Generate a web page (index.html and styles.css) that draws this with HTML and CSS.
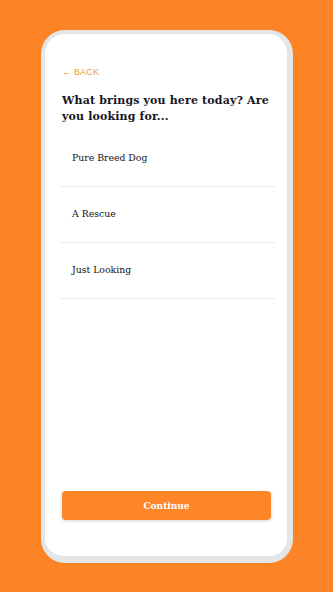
FILE: index.html
```html
<!DOCTYPE html>
<html>
<head>
<meta charset="utf-8">
<link rel="stylesheet" href="styles.css">
</head>
<body>
<div class="phone">
  <div class="screen">
    <a class="back">← BACK</a>
    <h1 class="title">What brings you here today? Are you looking for...</h1>
    <ul class="options">
      <li class="option">Pure Breed Dog</li>
      <li class="option">A Rescue</li>
      <li class="option">Just Looking</li>
    </ul>
    <button class="continue">Continue</button>
  </div>
</div>
</body>
</html>
```

FILE: styles.css
```css
html, body {
  margin: 0;
  padding: 0;
}
body {
  background: #fd8426;
  width: 333px;
  height: 592px;
  box-sizing: border-box;
  padding: 30px 40px 0 41px;
  font-family: "DejaVu Serif", serif;
}
.phone {
  width: 252px;
  height: 533px;
  box-sizing: border-box;
  border-style: solid;
  border-color: #e3e5e7;
  border-width: 4px 6px 7px 4px;
  border-radius: 24px;
  background: #ffffff;
  overflow: hidden;
}
.screen {
  height: 100%;
  box-sizing: border-box;
  padding: 32px 16px 36px 17px;
  display: flex;
  flex-direction: column;
}
.back {
  font-family: "Liberation Sans", Arial, sans-serif;
  font-size: 9px;
  line-height: 12px;
  color: #ec9a3c;
  letter-spacing: 0.2px;
}
.title {
  margin: 15px 0 6px 0;
  font-size: 11px;
  line-height: 16px;
  font-weight: 600;
  color: #16161e;
  letter-spacing: 0.15px;
}
.options {
  list-style: none;
  margin: 0 -4px 0 -2px;
  padding: 0;
  flex: 1;
}
.option {
  height: 56px;
  box-sizing: border-box;
  border-bottom: 1px solid #ececee;
  display: flex;
  align-items: center;
  padding-left: 12px;
  padding-bottom: 2px;
  font-size: 9.3px;
  color: #111118;
}
.continue {
  height: 29px;
  border: none;
  border-radius: 4px;
  background: #fd8629;
  color: #ffffff;
  font-family: "DejaVu Serif", serif;
  font-weight: bold;
  font-size: 9px;
  box-shadow: 0 1px 3px rgba(0,0,0,0.18);
  padding: 0;
}
```
